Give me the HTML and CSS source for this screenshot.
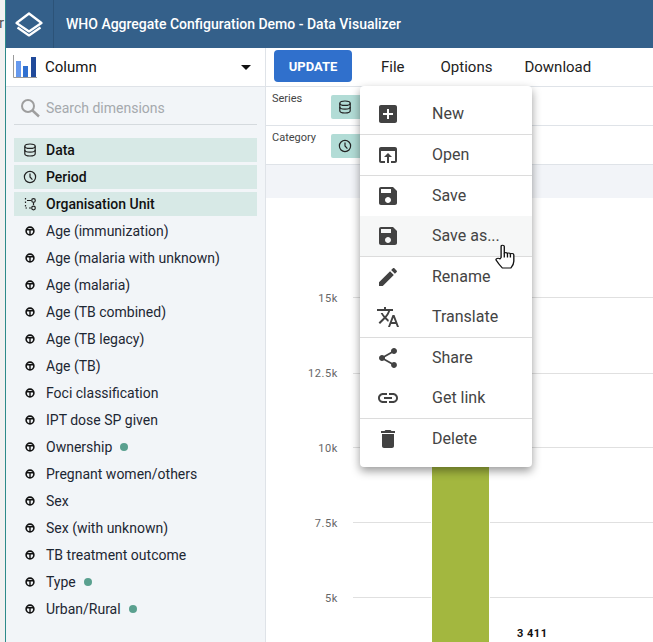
FILE: index.html
```html
<!DOCTYPE html>
<html lang="en">
<head>
  <meta charset="UTF-8" />
  <title>WHO Aggregate Configuration Demo - Data Visualizer</title>
  <link rel="stylesheet" href="styles.css">
</head>
<body>
  <div class="behind">
    <span class="behind-letter">r</span>
  </div>

  <div class="app">
    <header class="topbar">
      <div class="logo">
        <svg width="28" height="28" viewBox="0 0 28 28" fill="none" stroke="#fff" stroke-width="2.2" stroke-linejoin="round">
          <path d="M14 3.5 L26.5 13 L14 21.5 L1.5 13 Z" />
          <path d="M2.5 17.5 L14 25.5 L25.5 17.5" />
        </svg>
      </div>
      <div class="app-title">WHO Aggregate Configuration Demo - Data Visualizer</div>
    </header>

    <div class="main">
      <aside class="sidebar">
        <div class="type-picker">
          <svg class="type-icon" width="25" height="24" viewBox="0 0 25 24">
            <path d="M0.5 0 V22.5 H24" fill="none" stroke="#9a9a9a" />
            <rect x="3" y="6" width="5" height="16" fill="#6699ee" />
            <rect x="10" y="11" width="5" height="11" fill="#3070d0" />
            <rect x="18" y="2" width="5" height="20" fill="#214a9a" />
          </svg>
          <span class="type-name">Column</span>
          <span class="caret"></span>
        </div>

        <div class="dimensions">
          <div class="search">
            <svg width="20" height="20" viewBox="0 0 20 20" fill="none" stroke="#9e9e9e" stroke-width="2">
              <circle cx="8" cy="8" r="6" />
              <path d="M12.5 12.5 L19 18.5" stroke-width="2.4" />
            </svg>
            <span>Search dimensions</span>
          </div>

          <ul class="dim-list">
            <li class="dim selected">
              <svg class="dim-icon" width="14" height="14" viewBox="0 0 14 14" fill="none" stroke="#222" stroke-width="1.2">
                <ellipse cx="7" cy="3.2" rx="5.2" ry="2.2" />
                <path d="M1.8 3.2 V10.8 C1.8 12 4 13 7 13 S12.2 12 12.2 10.8 V3.2" />
                <path d="M1.8 7 C1.8 8.2 4 9.2 7 9.2 S12.2 8.2 12.2 7" />
              </svg>
              Data
            </li>
            <li class="dim selected">
              <svg class="dim-icon" width="14" height="14" viewBox="0 0 14 14" fill="none" stroke="#222" stroke-width="1.2">
                <circle cx="7" cy="7" r="5.6" />
                <path d="M7 3.6 V7 L9.4 9.6" />
              </svg>
              Period
            </li>
            <li class="dim selected">
              <svg class="dim-icon" width="14" height="14" viewBox="0 0 14 14" fill="none" stroke="#222" stroke-width="1.2">
                <path d="M2.5 1 V2.5 M2.5 4.5 V6 M2.5 8 V9.5 M2.5 11 H4 M6 11 H8 M4 3.5 H8" />
                <circle cx="10.5" cy="3.5" r="1.8" />
                <circle cx="10.5" cy="11" r="1.8" />
                <path d="M10.5 6 V8" />
              </svg>
              Organisation Unit
            </li>
            <li class="dim"><svg class="dim-icon small"><use href="#cube" /></svg>Age (immunization)</li>
            <li class="dim"><svg class="dim-icon small"><use href="#cube" /></svg>Age (malaria with unknown)</li>
            <li class="dim"><svg class="dim-icon small"><use href="#cube" /></svg>Age (malaria)</li>
            <li class="dim"><svg class="dim-icon small"><use href="#cube" /></svg>Age (TB combined)</li>
            <li class="dim"><svg class="dim-icon small"><use href="#cube" /></svg>Age (TB legacy)</li>
            <li class="dim"><svg class="dim-icon small"><use href="#cube" /></svg>Age (TB)</li>
            <li class="dim"><svg class="dim-icon small"><use href="#cube" /></svg>Foci classification</li>
            <li class="dim"><svg class="dim-icon small"><use href="#cube" /></svg>IPT dose SP given</li>
            <li class="dim"><svg class="dim-icon small"><use href="#cube" /></svg>Ownership<span class="dot"></span></li>
            <li class="dim"><svg class="dim-icon small"><use href="#cube" /></svg>Pregnant women/others</li>
            <li class="dim"><svg class="dim-icon small"><use href="#cube" /></svg>Sex</li>
            <li class="dim"><svg class="dim-icon small"><use href="#cube" /></svg>Sex (with unknown)</li>
            <li class="dim"><svg class="dim-icon small"><use href="#cube" /></svg>TB treatment outcome</li>
            <li class="dim"><svg class="dim-icon small"><use href="#cube" /></svg>Type<span class="dot"></span></li>
            <li class="dim"><svg class="dim-icon small"><use href="#cube" /></svg>Urban/Rural<span class="dot"></span></li>
          </ul>
        </div>
      </aside>

      <section class="content">
        <div class="toolbar">
          <button class="update">UPDATE</button>
          <span class="tool file">File</span>
          <span class="tool options">Options</span>
          <span class="tool download">Download</span>
        </div>

        <div class="layout-row">
          <span class="axis-label">Series</span>
          <span class="chip">
            <svg width="14" height="14" viewBox="0 0 14 14" fill="none" stroke="#222" stroke-width="1.2">
              <ellipse cx="7" cy="3.2" rx="5.2" ry="2.2" />
              <path d="M1.8 3.2 V10.8 C1.8 12 4 13 7 13 S12.2 12 12.2 10.8 V3.2" />
              <path d="M1.8 7 C1.8 8.2 4 9.2 7 9.2 S12.2 8.2 12.2 7" />
            </svg>
          </span>
        </div>
        <div class="layout-row">
          <span class="axis-label">Category</span>
          <span class="chip">
            <svg width="14" height="14" viewBox="0 0 14 14" fill="none" stroke="#222" stroke-width="1.2">
              <circle cx="7" cy="7" r="5.6" />
              <path d="M7 3.6 V7 L9.4 9.6" />
            </svg>
          </span>
        </div>
        <div class="title-band"></div>

        <div class="chart">
          <svg width="387" height="444" viewBox="0 0 387 444">
            <path class="grid" d="M87 99.5 H387 M87 175.5 H387 M87 249.5 H387 M87 324.5 H387 M87 399.5 H387" />
            <rect class="bar" x="166" y="240" width="57" height="210" />
            <g class="ticks">
              <text x="72" y="104">15k</text>
              <text x="72" y="179">12.5k</text>
              <text x="72" y="254">10k</text>
              <text x="72" y="329">7.5k</text>
              <text x="72" y="404">5k</text>
            </g>
            <text class="value" x="251" y="439">3 411</text>
          </svg>
        </div>
      </section>
    </div>

    <div class="menu">
      <div class="menu-item">
        <svg class="menu-icon" viewBox="0 0 24 24"><path d="M19 3H5c-1.11 0-2 .9-2 2v14c0 1.1.89 2 2 2h14c1.1 0 2-.9 2-2V5c0-1.1-.9-2-2-2zm-2 10h-4v4h-2v-4H7v-2h4V7h2v4h4v2z" /></svg>
        <span>New</span>
      </div>
      <hr />
      <div class="menu-item">
        <svg class="menu-icon" viewBox="0 0 24 24"><path d="M19 4H5c-1.11 0-2 .9-2 2v12c0 1.1.89 2 2 2h4v-2H5V8h14v10h-4v2h4c1.1 0 2-.9 2-2V6c0-1.1-.89-2-2-2zm-7 6l-4 4h3v6h2v-6h3l-4-4z" /></svg>
        <span>Open</span>
      </div>
      <hr />
      <div class="menu-item">
        <svg class="menu-icon" viewBox="0 0 24 24"><path d="M17 3H5c-1.11 0-2 .9-2 2v14c0 1.1.89 2 2 2h14c1.1 0 2-.9 2-2V7l-4-4zm-5 16c-1.66 0-3-1.34-3-3s1.34-3 3-3 3 1.34 3 3-1.34 3-3 3zm3-10H5V5h10v4z" /></svg>
        <span>Save</span>
      </div>
      <div class="menu-item hovered">
        <svg class="menu-icon" viewBox="0 0 24 24"><path d="M17 3H5c-1.11 0-2 .9-2 2v14c0 1.1.89 2 2 2h14c1.1 0 2-.9 2-2V7l-4-4zm-5 16c-1.66 0-3-1.34-3-3s1.34-3 3-3 3 1.34 3 3-1.34 3-3 3zm3-10H5V5h10v4z" /></svg>
        <span>Save as...</span>
      </div>
      <hr />
      <div class="menu-item">
        <svg class="menu-icon" viewBox="0 0 24 24"><path d="M3 17.25V21h3.75L17.81 9.94l-3.75-3.75L3 17.25zM20.71 7.04c.39-.39.39-1.02 0-1.41l-2.34-2.34c-.39-.39-1.02-.39-1.41 0l-1.83 1.83 3.75 3.75 1.83-1.83z" /></svg>
        <span>Rename</span>
      </div>
      <div class="menu-item">
        <svg class="menu-icon" viewBox="0 0 24 24"><path d="M12.87 15.07l-2.54-2.51.03-.03c1.74-1.94 2.98-4.17 3.71-6.53H17V4h-7V2H8v2H1v1.99h11.17C11.5 7.92 10.44 9.75 9 11.35 8.07 10.32 7.3 9.19 6.69 8h-2c.73 1.63 1.73 3.17 2.98 4.56l-5.09 5.02L4 19l5-5 3.11 3.11.76-2.04zM18.5 10h-2L12 22h2l1.12-3h4.75L21 22h2l-4.5-12zm-2.62 7l1.62-4.33L19.12 17h-3.24z" /></svg>
        <span>Translate</span>
      </div>
      <hr />
      <div class="menu-item">
        <svg class="menu-icon" viewBox="0 0 24 24"><path d="M18 16.08c-.76 0-1.44.3-1.96.77L8.91 12.7c.05-.23.09-.46.09-.7s-.04-.47-.09-.7l7.05-4.11c.54.5 1.25.81 2.04.81 1.66 0 3-1.34 3-3s-1.34-3-3-3-3 1.34-3 3c0 .24.04.47.09.7L8.04 9.81C7.5 9.31 6.79 9 6 9c-1.66 0-3 1.34-3 3s1.34 3 3 3c.79 0 1.5-.31 2.04-.81l7.12 4.16c-.05.21-.08.43-.08.65 0 1.61 1.31 2.92 2.92 2.92s2.92-1.31 2.92-2.92-1.31-2.92-2.92-2.92z" /></svg>
        <span>Share</span>
      </div>
      <div class="menu-item">
        <svg class="menu-icon" viewBox="0 0 24 24"><path d="M3.9 12c0-1.71 1.39-3.1 3.1-3.1h4V7H7c-2.76 0-5 2.24-5 5s2.24 5 5 5h4v-1.9H7c-1.71 0-3.1-1.39-3.1-3.1zM8 13h8v-2H8v2zm9-6h-4v1.9h4c1.71 0 3.1 1.39 3.1 3.1s-1.39 3.1-3.1 3.1h-4V17h4c2.76 0 5-2.24 5-5s-2.24-5-5-5z" /></svg>
        <span>Get link</span>
      </div>
      <hr />
      <div class="menu-item">
        <svg class="menu-icon" viewBox="0 0 24 24"><path d="M6 19c0 1.1.9 2 2 2h8c1.1 0 2-.9 2-2V7H6v12zM19 4h-3.5l-1-1h-5l-1 1H5v2h14V4z" /></svg>
        <span>Delete</span>
      </div>
    </div>

    <svg class="hand" width="22" height="25" viewBox="0 0 18 26" preserveAspectRatio="none" fill="#fff" stroke="#111" stroke-width="1.1" stroke-linejoin="round">
      <path d="M5 14 V2.5 C5 .8 7.6 .8 7.6 2.5 V10 C7.6 8.6 10.2 8.6 10.2 10.2 C10.2 9 12.6 9 12.6 10.6 C12.6 9.6 15.4 9.6 15.4 11.4 V18 C15.4 21 14 23.5 13 25 H6 C4.5 23 2.5 20 1 17 C.2 15.4 2.6 14 4 15.6 Z" />
      <path d="M7.6 10 V14 M10.2 10.2 V14 M12.6 10.6 V14" fill="none" />
    </svg>
  </div>

  <svg class="defs" width="0" height="0">
    <symbol id="cube" viewBox="0 0 10 10">
      <circle cx="5" cy="5" r="3.9" fill="none" stroke="#111" stroke-width="1.6" />
      <path d="M1.5 3.8 H8.5 M5 3.8 V8.5" fill="none" stroke="#111" stroke-width="1.4" />
    </symbol>
  </svg>
</body>
</html>
```

FILE: styles.css
```css
* {
  box-sizing: border-box;
}
html, body {
  margin: 0;
  height: 100%;
}
body {
  width: 653px;
  height: 642px;
  overflow: hidden;
  display: flex;
  background: #fff;
  font-family: Roboto, "Liberation Sans", sans-serif;
  color: #111;
}
.defs {
  position: absolute;
}

/* sliver of the window behind the app */
.behind {
  width: 5px;
  flex: none;
  background: #f1f1f1;
  padding-top: 15px;
  overflow: hidden;
  border-right: 0;
}
.behind-letter {
  display: block;
  margin-left: -1px;
  font-size: 15px;
  line-height: 17px;
  color: #555;
}

.app {
  position: relative;
  flex: 1;
  min-width: 0;
  display: flex;
  flex-direction: column;
  border-left: 1px solid #2e8a8a;
}

.topbar {
  height: 48px;
  flex: none;
  display: flex;
  align-items: center;
  background: #34608a;
  color: #fff;
}
.logo {
  width: 48px;
  height: 48px;
  display: flex;
  align-items: center;
  justify-content: center;
  border-right: 1px solid #2c5378;
}
.logo svg {
  margin-left: -1px;
}
.app-title {
  margin-left: 12px;
  font-size: 14px;
  font-weight: 500;
  white-space: nowrap;
}

.main {
  flex: 1;
  min-height: 0;
  display: flex;
}

.sidebar {
  width: 260px;
  flex: none;
  display: flex;
  flex-direction: column;
  border-right: 1px solid #dfe3e8;
  background: #f2f5f8;
}
.type-picker {
  height: 39px;
  flex: none;
  display: flex;
  align-items: center;
  padding: 0 14px 0 7px;
  background: #fff;
  border-bottom: 1px solid #dfe3e8;
}
.type-name {
  margin-left: 7px;
  font-size: 15px;
}
.caret {
  margin-left: auto;
  width: 0;
  height: 0;
  border-left: 5px solid transparent;
  border-right: 5px solid transparent;
  border-top: 5px solid #111;
}

.dimensions {
  flex: 1;
  min-height: 0;
  padding: 0 8px;
}
.search {
  height: 37px;
  margin-top: 1px;
  display: flex;
  align-items: center;
  gap: 6px;
  padding: 4px 0 0 6px;
  border-bottom: 1px solid #d5dade;
  font-size: 14px;
  color: #a5a9ad;
}

.dim-list {
  list-style: none;
  margin: 13px 0 0;
  padding: 0;
  display: flex;
  flex-direction: column;
  gap: 3px;
}
.dim {
  height: 24px;
  display: flex;
  align-items: center;
  padding-left: 9px;
  font-size: 14px;
  color: #1d2733;
  white-space: nowrap;
}
.dim.selected {
  background: #d7e9e6;
  font-weight: 500;
  color: #111;
}
.dim-icon {
  width: 14px;
  height: 14px;
  margin-right: 9px;
  flex: none;
}
.dim-icon.small {
  width: 10px;
  height: 10px;
  margin: 0 11px 0 2px;
}
.dot {
  width: 8px;
  height: 8px;
  margin-left: 8px;
  border-radius: 50%;
  background: #5aa08f;
}

.content {
  flex: 1;
  min-width: 0;
  display: flex;
  flex-direction: column;
  background: #fff;
}
.toolbar {
  height: 39px;
  flex: none;
  display: flex;
  align-items: center;
  padding: 0 0 2px 8px;
  border-bottom: 1px solid #dfe3e8;
}
.update {
  width: 78px;
  height: 32px;
  border: 0;
  border-radius: 4px;
  background: #3070cc;
  color: #fff;
  font-family: inherit;
  font-size: 13px;
  font-weight: 700;
}
.tool {
  padding-top: 2px;
  font-size: 15px;
  color: #222;
}
.file {
  margin-left: 29px;
}
.options {
  margin-left: 36px;
}
.download {
  margin-left: 32px;
}
.layout-row {
  height: 39px;
  flex: none;
  display: flex;
  align-items: flex-start;
  padding: 5px 0 0 6px;
  border-bottom: 1px solid #dfe3e8;
}
.axis-label {
  width: 59px;
  flex: none;
  font-size: 11px;
  line-height: 13px;
  color: #444;
}
.chip {
  width: 40px;
  height: 24px;
  margin-top: 3px;
  display: flex;
  align-items: center;
  padding-left: 7px;
  border-radius: 2px;
  background: #b2dcd6;
}
.title-band {
  height: 33px;
  flex: none;
  background: #f2f4f8;
}
.chart {
  flex: 1;
  min-height: 0;
  overflow: hidden;
}
.chart svg {
  display: block;
}
.grid {
  fill: none;
  stroke: #e0e0e0;
}
.bar {
  fill: #a3b73f;
  stroke: #fff;
  stroke-width: 2;
  paint-order: stroke;
}
.ticks text {
  text-anchor: end;
  font-size: 11px;
  letter-spacing: .6px;
  fill: #666;
}
.value {
  font-size: 11px;
  font-weight: 700;
  letter-spacing: .5px;
  fill: #111;
}

/* File dropdown */
.menu {
  position: absolute;
  left: 354px;
  top: 86px;
  width: 172px;
  height: 381px;
  padding-top: 8px;
  border-radius: 4px;
  background: #fff;
  box-shadow: 0 4px 10px rgba(0, 0, 0, .4);
}
.menu hr {
  margin: 0;
  border: 0;
  border-top: 1px solid #dcdcdc;
}
.menu-item {
  height: 40px;
  display: flex;
  align-items: center;
  padding-left: 16px;
  font-size: 16px;
  color: #444;
}
.menu-item span {
  margin-top: -2px;
}
.menu-item.hovered {
  background: #f6f7f7;
}
.menu-icon {
  width: 24px;
  height: 24px;
  flex: none;
  margin-right: 32px;
  fill: #424242;
}
.hand {
  position: absolute;
  left: 489px;
  top: 244px;
}
```
